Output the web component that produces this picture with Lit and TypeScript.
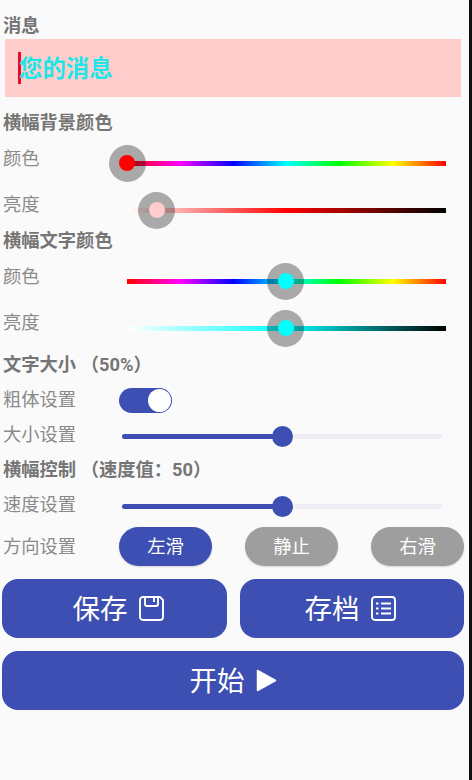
import { LitElement, html, css } from "lit";
import { customElement } from "lit/decorators.js";

const HUE = "linear-gradient(90deg,#f00,#f0f 16.67%,#00f 33.33%,#0ff 50%,#0f0 66.67%,#ff0 83.33%,#f00)";

@customElement("app-root")
export class AppRoot extends LitElement {
  static styles = css`
    :host { display: block; width: 472px; height: 780px; background: #111; font-family: Roboto, "Noto Sans CJK SC", sans-serif; overflow: hidden; }
    .page { width: 469px; height: 780px; background: #fafafa; padding: 14px 0 0 3px; box-sizing: border-box; display: flex; flex-direction: column; }
    .head { font-size: 18.3px; font-weight: 700; line-height: 24px; color: #757575; height: 22px; flex: none; }
    .banner { margin: 3px 8px 0 2px; height: 58px; background: #ffcccc; display: flex; align-items: center; padding-left: 13px; box-sizing: border-box; flex: none; }
    .caret { width: 3px; height: 32px; background: #e0102a; flex: none; }
    .msg { font-size: 23.4px; font-weight: 700; color: #1fe6e6; line-height: 34px; height: 32px; margin-left: -2px; }
    .crow { display: flex; font-size: 18.3px; color: #8a8a8a; line-height: 24px; flex: none; }
    .crow > .lbl { width: 116px; flex: none; height: 22px; }
    .cslider { position: relative; width: 319px; height: 5px; margin-left: 8px; }
    .cbar { position: absolute; inset: 0; }
    .thumb { position: absolute; top: 50%; width: 37px; height: 37px; margin: -18.5px 0 0 -18.5px; border-radius: 50%; background: rgba(0,0,0,.32); display: flex; align-items: center; justify-content: center; }
    .thumb i { display: block; width: 16px; height: 16px; border-radius: 50%; }
    .row { display: flex; align-items: center; font-size: 18.3px; color: #8a8a8a; line-height: 24px; flex: none; }
    .row > .lbl { width: 116px; flex: none; }
    .switch { width: 53px; height: 25px; border-radius: 13px; background: #3d4fb2; position: relative; }
    .switch i { position: absolute; right: 1px; top: 1px; width: 23px; height: 23px; border-radius: 50%; background: #fff; }
    .mslider { position: relative; width: 320px; height: 5px; margin: 2px 0 0 3px; border-radius: 3px; background: #eeeef4; }
    .mslider b { position: absolute; left: 0; top: 0; bottom: 0; width: 50%; border-radius: 3px; background: #3d4fb2; }
    .mslider i { position: absolute; left: 50%; top: 50%; width: 21px; height: 21px; margin: -10.5px 0 0 -10.5px; border-radius: 50%; background: #3d4fb2; }
    .dirs { display: flex; gap: 33px; }
    .pill { width: 93px; height: 39px; border-radius: 20px; background: #9e9e9e; color: #fff; font-size: 18.3px; display: flex; align-items: center; justify-content: center; box-shadow: 0 1px 2px rgba(0,0,0,.15); }
    .pill.on { background: #3d4fb2; }
    .btns { display: flex; gap: 13px; width: 462px; margin-left: -1px; flex: none; }
    .btn { flex: 1; height: 59px; border-radius: 16px; box-sizing: border-box; background: #3d4fb2; color: #fff; font-size: 27.5px; display: flex; align-items: center; justify-content: center; gap: 11px; }
    .btn span { margin-top: -3px; }
    .btn.a { flex: 0 0 225px; padding-left: 7px; }
    .btn.b { flex: 0 0 224px; padding-right: 4px; }
    .btn svg { display: block; fill: none; stroke: #fff; stroke-width: 1.9; }
    .btn svg.play { fill: #fff; stroke-linejoin: round; stroke-width: 1.5; }
    .m1 { margin-top: 14px; height: 46px; }
    .m2 { height: 36px; }
    .m3 { margin-top: 14px; height: 46px; }
    .m4 { height: 42px; }
    .o14 { margin-top: 13.5px; }
    .o15 { margin-top: 14.5px; }
    .o16 { margin-top: 14.5px; }
  `;

  private cs(bg: string, pct: number, color: string, off: string) {
    return html`<div class="cslider ${off}">
      <div class="cbar" style="background:${bg}"></div>
      <div class="thumb" style="left:${pct}%"><i style="background:${color}"></i></div>
    </div>`;
  }

  render() {
    return html`<div class="page">
      <div class="head">消息</div>
      <div class="banner"><div class="caret"></div><div class="msg">您的消息</div></div>
      <div class="head" style="margin-top:14px">横幅背景颜色</div>
      <div class="crow m1"><div class="lbl">颜色</div>${this.cs(HUE, 0, "#f00", "o14")}</div>
      <div class="crow m2"><div class="lbl">亮度</div>${this.cs("linear-gradient(90deg,#fff,#f00 50%,#000)", 9.4, "#ffcccc", "o15")}</div>
      <div class="head">横幅文字颜色</div>
      <div class="crow m3"><div class="lbl">颜色</div>${this.cs(HUE, 49.8, "#0ff", "o14")}</div>
      <div class="crow m4"><div class="lbl">亮度</div>${this.cs("linear-gradient(90deg,#fff,#0ff 50%,#000)", 49.8, "#0ff", "o16")}</div>
      <div class="head">文字大小 （50%）</div>
      <div class="row" style="height:26px;margin-top:12px">
        <div class="lbl">粗体设置</div><div class="switch"><i></i></div>
      </div>
      <div class="row" style="height:22px;margin-top:11px">
        <div class="lbl">大小设置</div><div class="mslider"><b></b><i></i></div>
      </div>
      <div class="head" style="margin-top:12px">横幅控制 （速度值：50）</div>
      <div class="row" style="height:22px;margin-top:14px">
        <div class="lbl">速度设置</div><div class="mslider"><b></b><i></i></div>
      </div>
      <div class="row" style="margin-top:11px">
        <div class="lbl">方向设置</div>
        <div class="dirs">
          <div class="pill on">左滑</div><div class="pill">静止</div><div class="pill">右滑</div>
        </div>
      </div>
      <div class="btns" style="margin-top:13px">
        <div class="btn a"><span>保存</span>
          <svg width="25" height="25" viewBox="0 0 25 25"><path d="M4 1h17l3 3v17a3 3 0 0 1-3 3H4a3 3 0 0 1-3-3V4a3 3 0 0 1 3-3z"/><path d="M6 1v7a2 2 0 0 0 2 2h9a2 2 0 0 0 2-2V1M15 2v4"/></svg>
        </div>
        <div class="btn b"><span>存档</span>
          <svg width="25" height="25" viewBox="0 0 25 25"><path d="M4 1h17a3 3 0 0 1 3 3v17a3 3 0 0 1-3 3H4a3 3 0 0 1-3-3V4a3 3 0 0 1 3-3z"/><path d="M5 7.5h2.5M10 7.5h10M5 12.5h2.5M10 12.5h10M5 17.5h2.5M10 17.5h10"/></svg>
        </div>
      </div>
      <div class="btns" style="margin-top:13px">
        <div class="btn"><span>开始</span>
          <svg class="play" width="21" height="23" viewBox="0 0 21 23"><path d="M1.5 1.5l18 10-18 10z"/></svg>
        </div>
      </div>
    </div>`;
  }
}
